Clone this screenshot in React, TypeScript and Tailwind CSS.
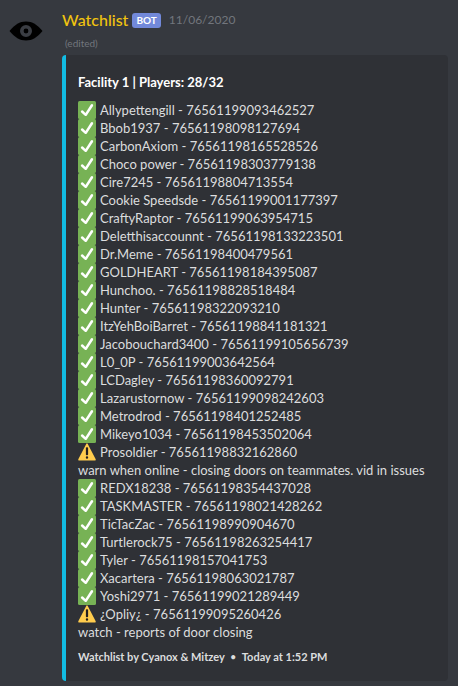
import React from "react";

type Entry = { name: string; id: string; status: "ok" | "warn"; note?: string };

const entries: Entry[] = [
  { name: "Allypettengill", id: "76561199093462527", status: "ok" },
  { name: "Bbob1937", id: "76561198098127694", status: "ok" },
  { name: "CarbonAxiom", id: "76561198165528526", status: "ok" },
  { name: "Choco power", id: "76561198303779138", status: "ok" },
  { name: "Cire7245", id: "76561198804713554", status: "ok" },
  { name: "Cookie Speedsde", id: "76561199001177397", status: "ok" },
  { name: "CraftyRaptor", id: "76561199063954715", status: "ok" },
  { name: "Deletthisaccounnt", id: "76561198133223501", status: "ok" },
  { name: "Dr.Meme", id: "76561198400479561", status: "ok" },
  { name: "GOLDHEART", id: "76561198184395087", status: "ok" },
  { name: "Hunchoo.", id: "76561198828518484", status: "ok" },
  { name: "Hunter", id: "76561198322093210", status: "ok" },
  { name: "ItzYehBoiBarret", id: "76561198841181321", status: "ok" },
  { name: "Jacobouchard3400", id: "76561199105656739", status: "ok" },
  { name: "L0_0P", id: "76561199003642564", status: "ok" },
  { name: "LCDagley", id: "76561198360092791", status: "ok" },
  { name: "Lazarustornow", id: "76561199098242603", status: "ok" },
  { name: "Metrodrod", id: "76561198401252485", status: "ok" },
  { name: "Mikeyo1034", id: "76561198453502064", status: "ok" },
  {
    name: "Prosoldier",
    id: "76561198832162860",
    status: "warn",
    note: "warn when online - closing doors on teammates. vid in issues",
  },
  { name: "REDX18238", id: "76561198354437028", status: "ok" },
  { name: "TASKMASTER", id: "76561198021428262", status: "ok" },
  { name: "TicTacZac", id: "76561198990904670", status: "ok" },
  { name: "Turtlerock75", id: "76561198263254417", status: "ok" },
  { name: "Tyler", id: "76561198157041753", status: "ok" },
  { name: "Xacartera", id: "76561198063021787", status: "ok" },
  { name: "Yoshi2971", id: "76561199021289449", status: "ok" },
  { name: "¿Opliy¿", id: "76561199095260426", status: "warn", note: "watch - reports of door closing" },
];

function CheckEmoji() {
  return (
    <svg viewBox="0 0 36 36" className="size-[18px] shrink-0" role="img" aria-label="Clear">
      <rect width="36" height="36" rx="3" fill="#77b255" />
      <path
        fill="#fff"
        d="M29.28 6.362a2.502 2.502 0 0 0-3.458.736L14.936 23.877l-5.029-4.65a2.5 2.5 0 1 0-3.394 3.671l7.209 6.666c.48.445 1.09.665 1.696.665.673 0 1.534-.282 2.099-1.139.332-.506 12.5-19.27 12.5-19.27a2.5 2.5 0 0 0-.737-3.458z"
      />
    </svg>
  );
}

function WarnEmoji() {
  return (
    <svg viewBox="0 0 36 36" className="size-[18px] shrink-0" role="img" aria-label="Warning">
      <path
        fill="#ffcc4d"
        d="M2.653 35C.811 35-.001 33.662.847 32.027L16.456 1.972c.849-1.635 2.238-1.635 3.087 0l15.609 30.056c.85 1.634.037 2.972-1.805 2.972H2.653z"
      />
      <path
        fill="#231f20"
        d="M15.583 28.953a2.421 2.421 0 0 1 2.419-2.418 2.421 2.421 0 0 1 2.418 2.418 2.422 2.422 0 0 1-2.418 2.419 2.422 2.422 0 0 1-2.419-2.419zm.186-18.293c0-1.302.961-2.108 2.232-2.108 1.241 0 2.233.837 2.233 2.108v11.938c0 1.271-.992 2.108-2.233 2.108-1.271 0-2.232-.807-2.232-2.108V10.66z"
      />
    </svg>
  );
}

function Avatar() {
  return (
    <svg viewBox="0 0 34 20" className="mt-[21px] h-5 w-[34px] shrink-0" role="img" aria-label="Watchlist avatar">
      <path fill="#000" d="M0.5 10C6 3.500 10.500 .5 17 .5S28 3.500 33.500 10C28 16.500 23.500 19.500 17 19.500S6 16.500 .5 10z" />
      <circle cx="17" cy="10" r="4.200" fill="none" stroke="#3a3d43" strokeWidth="3.600" />
      <circle cx="17" cy="10" r="2" fill="#000" />
    </svg>
  );
}

export default function App() {
  return (
    <main className="flex min-h-screen gap-[19px] bg-[#36393f] pr-[10px] pl-[9px] font-['Lato','Noto_Sans',sans-serif]">
      <Avatar />
      <article className="min-w-0 flex-1 pt-[9px] pb-[5px]">
        <header className="flex h-[22px] items-center">
          <h1 className="text-[16px] font-medium text-[#f1c40f]">Watchlist</h1>
          <span className="ml-1 flex h-[15px] items-center rounded-[3px] bg-[#7289da] px-1 text-[10px] font-bold text-white">
            BOT
          </span>
          <time className="ml-2 text-[12px] text-[#72767d]">11/06/2020</time>
        </header>
        <p className="h-6 pl-[3px] text-[10px] leading-6 text-[#72767d]">(edited)</p>

        <section className="rounded border-l-4 border-[#12bce3] bg-[#2f3136] px-3 pt-[18px] pb-4">
          <h2 className="text-[13px] leading-[18px] font-bold text-white">Facility 1 | Players: 28/32</h2>
          <ul className="mt-[10px] text-[13px] leading-[18px] text-[#dcddde]">
            {entries.map((e) => (
              <li key={e.id}>
                <div className="flex gap-1">
                  {e.status === "ok" ? <CheckEmoji /> : <WarnEmoji />}
                  <span>
                    {e.name} - {e.id}
                  </span>
                </div>
                {e.note && <p className="whitespace-nowrap">{e.note}</p>}
              </li>
            ))}
          </ul>
          <footer className="mt-2 text-[11px] leading-4 font-bold text-[#dcddde]">
            Watchlist by Cyanox &amp; Mitzey <span className="mx-[3px] font-normal">•</span> Today at 1:52 PM
          </footer>
        </section>
      </article>
    </main>
  );
}
